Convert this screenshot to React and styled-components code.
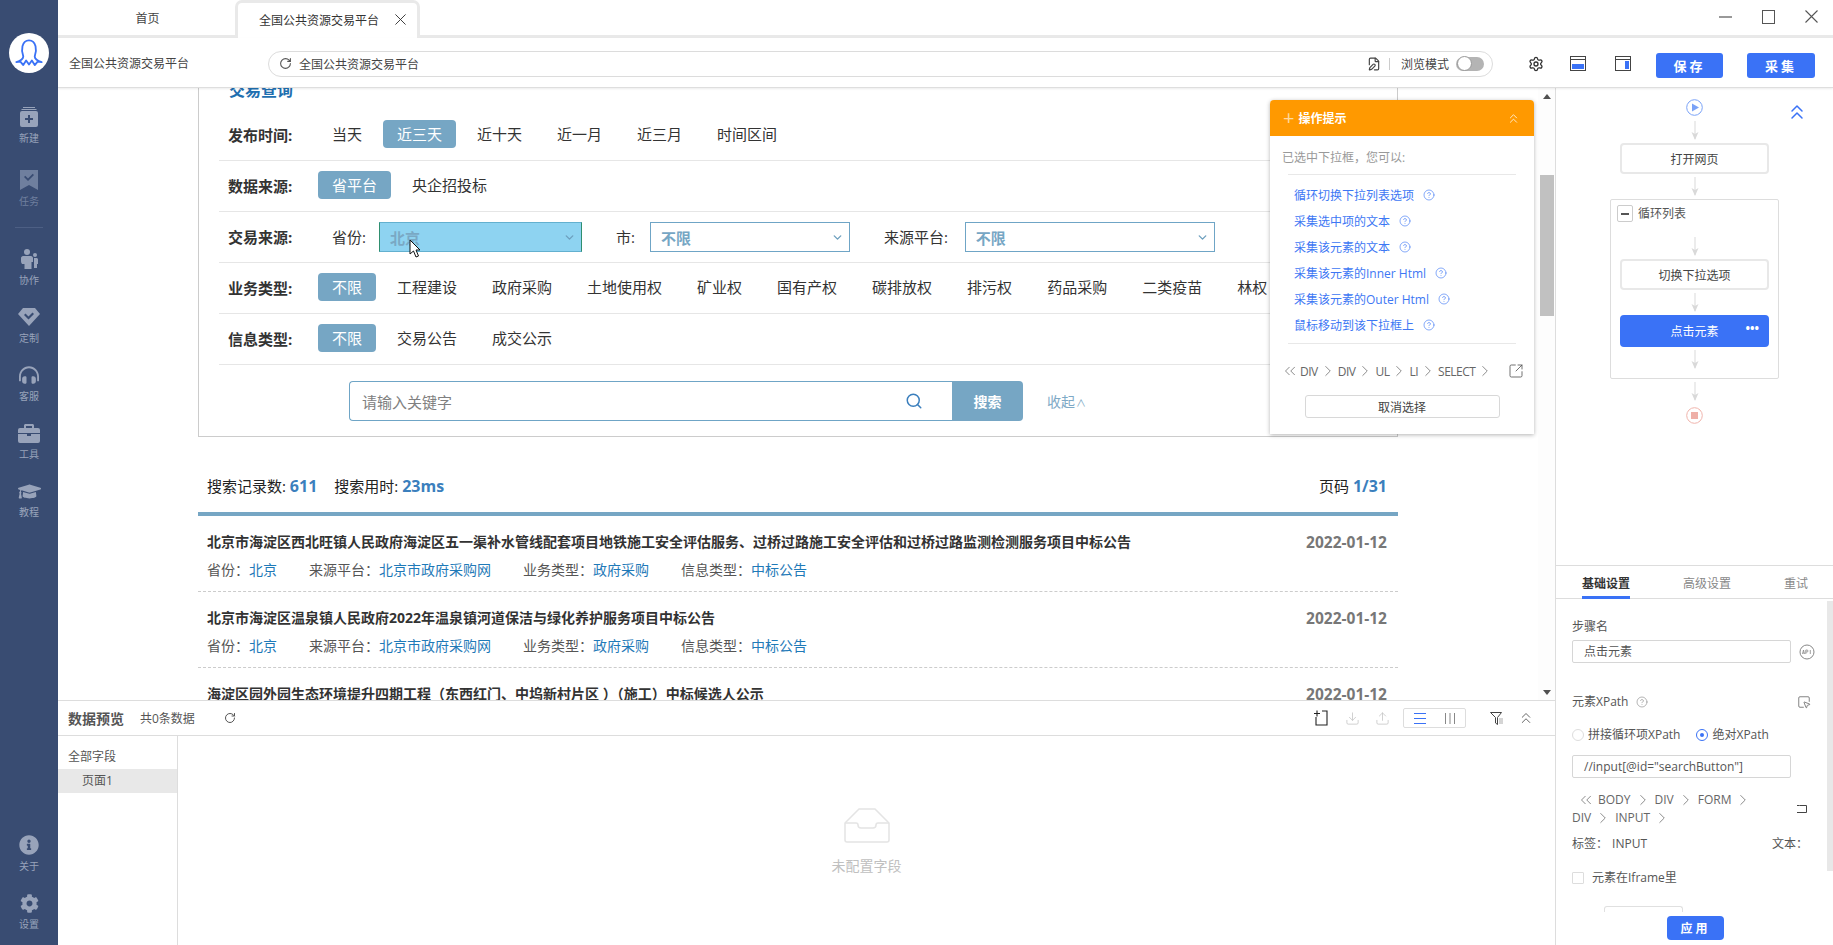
import React from "react";
import styled, { createGlobalStyle } from "styled-components";
import {
  ChevronDown,
  ChevronRight,
  ChevronsLeft,
  ChevronsUp,
  CircleHelp,
  Download,
  FilePen,
  RotateCw,
  Search,
  Settings,
  SquareArrowOutUpRight,
  SquareMousePointer,
  Upload,
} from "lucide-react";
import { FaCog, FaGraduationCap, FaHeadphonesAlt, FaInfoCircle } from "react-icons/fa";

const GlobalStyle = createGlobalStyle`
  html, body { margin: 0; padding: 0; height: 100%; background: #fff; overflow: hidden; }
  body { font-family: "Open Sans", "Noto Sans CJK SC", sans-serif; font-size: 12px; color: #333; }
  * { box-sizing: border-box; }
`;

// full-width punctuation, kept as escapes so that it cannot get normalized away
const COLON = "\uFF1A";
const COMMA = "\uFF0C";
const LP = "\uFF08";
const RP = "\uFF09";

// --- shell ---

const Shell = styled.div`
  display: flex;
  width: 1833px;
  height: 945px;
  overflow: hidden;
`;

const Sidebar = styled.aside`
  width: 58px;
  flex: none;
  background: #394c72;
  display: flex;
  flex-direction: column;
  align-items: center;
  padding: 33px 0 14px;
`;

const Logo = styled.div`
  width: 40px;
  height: 40px;
  border-radius: 50%;
  background: #fff;
  margin-bottom: 34px;
  display: flex;
`;

const NavGroup = styled.div`
  display: flex;
  flex-direction: column;
  align-items: center;
  gap: ${(p) => p.$gap}px;
  margin-top: ${(p) => (p.$bottom ? "auto" : "0")};
`;

const NavItem = styled.div`
  display: flex;
  flex-direction: column;
  align-items: center;
  color: ${(p) => (p.$dim ? "#6f7f9e" : "#98a3ba")};
`;

const NavIcon = styled.div`
  height: 20px;
  display: flex;
  align-items: center;
  justify-content: center;
`;

const NavLabel = styled.div`
  font-size: 10px;
  line-height: 14px;
  margin-top: 4px;
`;

const NavDivider = styled.div`
  width: 28px;
  height: 1px;
  background: #4d5f84;
  margin: 19px 0 21px;
`;

const Workspace = styled.div`
  flex: 1;
  min-width: 0;
  display: flex;
  flex-direction: column;
`;

// --- tabs ---

const TabBar = styled.div`
  height: 38px;
  flex: none;
  display: flex;
  align-items: stretch;
  border-bottom: 3px solid #e9e9e9;
`;

const HomeTab = styled.div`
  width: 177px;
  display: flex;
  align-items: center;
  justify-content: center;
  padding-left: 2px;
  color: #444;
`;

const ActiveTab = styled.div`
  width: 185px;
  margin: 0 0 -3px 0;
  border: 3px solid #e9e9e9;
  border-bottom: none;
  border-radius: 7px 7px 0 0;
  background: #fff;
  display: flex;
  align-items: center;
  padding: 0 0 2px 21px;
  gap: 16px;
  color: #333;
  position: relative;
`;

const WindowControls = styled.div`
  margin-left: auto;
  display: flex;
  align-items: center;
  gap: 30px;
  padding: 0 15px 2px 0;
  color: #555;
`;

// --- toolbar ---

const Toolbar = styled.div`
  height: 50px;
  flex: none;
  display: flex;
  align-items: center;
  padding: 2px 16px 0 11px;
  background: #fff;
  border-bottom: 1px solid #dedede;
  box-shadow: 0 1px 2px rgba(0, 0, 0, 0.08);
  position: relative;
  z-index: 3;
`;

const PageTitle = styled.div`
  width: 199px;
  flex: none;
  color: #444;
  margin-top: -2px;
`;

const AddressBar = styled.div`
  width: 1225px;
  height: 26px;
  flex: none;
  border: 1px solid #dcdcdc;
  border-radius: 13px;
  display: flex;
  align-items: center;
  padding: 0 8px 0 10px;
  color: #444;
`;

const AddressText = styled.span`
  margin-left: 7px;
  flex: 1;
`;

const AddressSep = styled.span`
  width: 1px;
  height: 12px;
  background: #ccc;
  margin: 0 11px 0 8px;
`;

const Toggle = styled.span`
  width: 28px;
  height: 14px;
  border-radius: 7px;
  background: #b4b4b4;
  margin-left: 7px;
  display: flex;
  align-items: center;
  padding-left: 1px;

  &::before {
    content: "";
    width: 13px;
    height: 13px;
    border-radius: 50%;
    background: #fff;
    border: 1px solid #999;
  }
`;

const ToolIcons = styled.div`
  display: flex;
  align-items: center;
  margin-left: 35px;
  color: #333;
`;

const ToolIcon = styled.span`
  display: flex;
  margin-left: ${(p) => p.$ml || 0}px;
`;

const PrimaryButton = styled.button`
  height: 25px;
  width: ${(p) => p.$width || 67}px;
  margin-left: ${(p) => p.$ml || 25}px;
  margin-top: 3px;
  border: none;
  border-radius: 3px;
  background: #3a72f6;
  color: #fff;
  font: bold 13px "Open Sans", "Noto Sans CJK SC", sans-serif;
  letter-spacing: 3px;
`;

// --- body ---

const Body = styled.div`
  flex: 1;
  min-height: 0;
  display: flex;
`;

const Center = styled.div`
  flex: 1;
  min-width: 0;
  display: flex;
  flex-direction: column;
`;

const Browser = styled.div`
  height: 612px;
  flex: none;
  display: flex;
  position: relative;
  overflow: hidden;
`;

const PageScroll = styled.div`
  flex: 1;
  min-width: 0;
  overflow: hidden;
  padding-left: 140px;
`;

const PageInner = styled.div`
  width: 1200px;
  margin-top: -14px;
`;

const Scrollbar = styled.div`
  width: 17px;
  flex: none;
  display: flex;
  flex-direction: column;
  align-items: center;
  padding: 6px 0 5px;
  background: #fdfdfd;
`;

const ScrollArrow = styled.span`
  width: 0;
  height: 0;
  border-left: 4px solid transparent;
  border-right: 4px solid transparent;
  ${(p) => (p.$down ? "border-top: 5px solid #505050;" : "border-bottom: 5px solid #505050;")}
  ${(p) => (p.$down ? "margin-top: auto;" : "")}
`;

const ScrollThumb = styled.div`
  width: 14px;
  height: 141px;
  background: #c1c1c1;
  margin-top: 76px;
`;

const Card = styled.section`
  border: 1px solid #ccc;
  border-top: none;
  height: 363px;
`;

const CardTitle = styled.h2`
  margin: 0 0 0 30px;
  height: 36px;
  font-size: 16px;
  line-height: 32px;
  font-weight: bold;
  color: #1f6fb0;
`;

const FilterRow = styled.div`
  height: 51px;
  margin-left: 20px;
  padding: 10px 0 0 9px;
  border-bottom: 1px solid #e6e6e6;
  display: flex;
  align-items: flex-start;
  font-size: 15px;
  color: #333;
`;

const FilterLabel = styled.div`
  width: 90px;
  flex: none;
  font-weight: bold;
  line-height: 30px;
`;

const OptionList = styled.div`
  display: flex;
  gap: 7px;
  white-space: nowrap;
`;

const Option = styled.div`
  height: 28px;
  line-height: 28px;
  padding: 0 14px;
  border-radius: 4px;
  ${(p) => (p.$active ? "background: #76a6c4; color: #fff;" : "")}
`;

const SelectLabel = styled.div`
  line-height: 31px;
  margin-left: ${(p) => p.$ml}px;
  margin-right: ${(p) => p.$mr}px;
`;

const Select = styled.div`
  width: ${(p) => p.$width}px;
  height: 30px;
  border: 1px solid #6fa5c6;
  display: flex;
  align-items: center;
  justify-content: space-between;
  padding: 0 5px 0 10px;
  font-weight: bold;
  color: #76a6c4;
  position: relative;
  ${(p) =>
    p.$picked
      ? "background: #8ed3f1; border-left-color: #2f8f6f; border-right-color: #2f8f6f; border-top-color: #63b0cf; border-bottom-color: #63b0cf; color: #7aa8c4;"
      : ""}
`;

const Cursor = styled.svg`
  position: absolute;
  left: 29px;
  top: 16px;
`;

const SearchRow = styled.div`
  display: flex;
  align-items: center;
  margin: 16px 0 0 150px;
`;

const SearchBox = styled.div`
  width: 603px;
  height: 40px;
  border: 1px solid #6fa5c6;
  border-right: none;
  border-radius: 4px 0 0 4px;
  display: flex;
  align-items: center;
  justify-content: space-between;
  padding: 0 29px 0 12px;
  font-size: 15px;
  color: #808080;
`;

const SearchButton = styled.button`
  width: 71px;
  height: 40px;
  border: none;
  border-radius: 0 4px 4px 0;
  background: #76a6c4;
  color: #fff;
  font: bold 14px "Open Sans", "Noto Sans CJK SC", sans-serif;
`;

const Collapse = styled.div`
  margin-left: 24px;
  font-size: 14px;
  color: #7ea9c6;
`;

const CollapseCaret = styled.span`
  font-size: 10px;
  margin-left: 1px;
`;

const Stats = styled.div`
  height: 75px;
  padding: 39px 11px 0 9px;
  display: flex;
  font-size: 15px;
  line-height: 20px;
  color: #222;
  justify-content: space-between;
`;

const StatGroup = styled.div`
  display: flex;
  gap: ${(p) => p.$gap || 0}px;
`;

const Stat = styled.span`
  white-space: pre;
`;

const StatValue = styled.b`
  font-size: 16px;
  color: #3b7fbd;
`;

const ResultList = styled.div`
  border-top: 4px solid #76a6c4;
`;

const ResultItem = styled.article`
  height: 76px;
  padding: 14px 11px 0 9px;
  border-bottom: 1px dashed #ccc;
`;

const ResultHead = styled.div`
  display: flex;
  justify-content: space-between;
  line-height: 24px;
`;

const ResultTitle = styled.div`
  font-size: 14px;
  font-weight: bold;
  color: #333;
`;

const ResultDate = styled.div`
  font-size: 15.500px;
  font-weight: bold;
  color: #777;
`;

const MetaRow = styled.div`
  margin-top: 6px;
  line-height: 20px;
  display: flex;
  font-size: 14px;
  color: #555;
`;

const MetaField = styled.div`
  width: ${(p) => p.$width}px;
  flex: none;
`;

const MetaValue = styled.span`
  color: #1f7ab8;
`;

// --- tip popup ---

const TipBox = styled.div`
  position: absolute;
  left: 1212px;
  top: 12px;
  width: 264px;
  height: 334px;
  background: #fff;
  border-radius: 4px 4px 0 0;
  box-shadow: 0 1px 4px rgba(0, 0, 0, 0.3);
  z-index: 2;
`;

const TipHeader = styled.div`
  height: 36px;
  background: #ff9900;
  border-radius: 4px 4px 0 0;
  color: #fff;
  display: flex;
  align-items: center;
  padding: 0 13px;
  font-weight: bold;
`;

const TipPlus = styled.span`
  font-size: 20px;
  font-weight: normal;
  color: #ffd9a0;
  margin-right: 4px;
  line-height: 1;
`;

const TipHint = styled.div`
  padding: 14px 12px 0;
  line-height: 16px;
  color: #999;
  height: 38px;
`;

const TipRule = styled.div`
  height: 1px;
  margin: 0 18px;
  background: #e8e8e8;
`;

const TipLinks = styled.div`
  display: flex;
  flex-direction: column;
  padding: 7px 0 5px 24px;
`;

const TipLink = styled.div`
  height: 26px;
  display: flex;
  align-items: center;
  gap: 9px;
  color: #3d77f4;
`;

const Crumbs = styled.div`
  display: flex;
  align-items: center;
  gap: ${(p) => p.$gap || 0}px;
  color: #666;
  white-space: nowrap;
  height: ${(p) => p.$height || 18}px;
  margin-left: ${(p) => p.$ml || 0}px;
  letter-spacing: ${(p) => p.$tight ? "-0.5px" : "0"};
`;

const TipCrumbRow = styled.div`
  display: flex;
  align-items: center;
  justify-content: space-between;
  margin-top: 18px;
  padding: 0 10px 0 11px;
  color: #555;
`;

const CancelButton = styled.div`
  width: 195px;
  height: 23px;
  margin: 15px auto 0;
  border: 1px solid #d8d8d8;
  border-radius: 3px;
  display: flex;
  align-items: center;
  justify-content: center;
  color: #444;
`;

// --- data preview ---

const Preview = styled.div`
  flex: 1;
  min-height: 0;
  border-top: 1px solid #ddd;
  display: flex;
  flex-direction: column;
  background: #fff;
`;

const PreviewBar = styled.div`
  height: 35px;
  flex: none;
  border-bottom: 1px solid #ddd;
  display: flex;
  align-items: center;
  padding: 0 0 0 10px;
`;

const PreviewTitle = styled.b`
  font-size: 14px;
  font-weight: bold;
  color: #555;
  margin-right: 16px;
`;

const PreviewCount = styled.span`
  color: #555;
  margin-right: 29px;
`;

const PreviewActions = styled.div`
  margin-left: auto;
  padding-right: 20px;
  display: flex;
  align-items: center;
  color: #333;
`;

const ActionIcon = styled.span`
  width: 18px;
  display: flex;
  justify-content: center;
  margin-left: ${(p) => p.$ml}px;
  color: ${(p) => p.$color || "#333"};
`;

const ViewSwitch = styled.div`
  width: 63px;
  height: 20px;
  margin-left: 12px;
  border: 1px solid #ddd;
  border-radius: 2px;
  display: flex;
  align-items: center;
  justify-content: space-around;
`;

const PreviewBody = styled.div`
  flex: 1;
  min-height: 0;
  display: flex;
`;

const FieldTree = styled.div`
  width: 120px;
  flex: none;
  border-right: 1px solid #ddd;
  padding-top: 10px;
`;

const FieldRoot = styled.div`
  height: 23px;
  line-height: 22px;
  padding-left: 10px;
  color: #555;
`;

const FieldChild = styled.div`
  height: 24px;
  line-height: 24px;
  padding-left: 24px;
  background: #e8e8e8;
  color: #555;
`;

const EmptyState = styled.div`
  flex: 1;
  display: flex;
  flex-direction: column;
  align-items: center;
  padding-top: 72px;
  font-size: 14px;
  color: #c0c0c0;
`;

const EmptyText = styled.div`
  margin-top: 13px;
  line-height: 20px;
`;

// --- right panel ---

const RightPanel = styled.div`
  width: 278px;
  flex: none;
  border-left: 1px solid #ddd;
  display: flex;
  flex-direction: column;
`;

const FlowArea = styled.div`
  height: 477px;
  flex: none;
  padding-top: 11px;
  display: flex;
  flex-direction: column;
  align-items: center;
  position: relative;
`;

const FlowCollapse = styled.span`
  position: absolute;
  left: 229px;
  top: 12px;
  display: flex;
  color: #3a72f6;
`;

const FlowEnd = styled.span`
  display: flex;
  margin: ${(p) => p.$margin};
`;

const FlowArrow = styled.svg`
  display: block;
  margin: 3px 0;
  flex: none;
`;

const FlowNode = styled.div`
  width: 149px;
  height: ${(p) => p.$height || 31}px;
  flex: none;
  border-radius: 4px;
  border: 2px solid ${(p) => (p.$active ? "#3a72f6" : "#e8e8e8")};
  background: ${(p) => (p.$active ? "#3a72f6" : "#fff")};
  color: ${(p) => (p.$active ? "#fff" : "#444")};
  display: flex;
  align-items: center;
  justify-content: center;
  position: relative;
`;

const NodeDots = styled.span`
  position: absolute;
  right: 8px;
  top: 5px;
  font-size: 12px;
  line-height: 14px;
  font-weight: bold;
  letter-spacing: 0;
`;

const LoopBox = styled.div`
  width: 169px;
  height: 180px;
  flex: none;
  border: 1px solid #ddd;
  border-radius: 2px;
  display: flex;
  flex-direction: column;
  align-items: center;
  position: relative;
`;

const LoopHead = styled.div`
  width: 100%;
  height: 34px;
  padding: 5px 0 0 6px;
  display: flex;
  align-items: flex-start;
  gap: 5px;
  color: #555;
  line-height: 17px;
`;

const LoopToggle = styled.span`
  width: 16px;
  height: 17px;
  border: 1px solid #ccc;
  border-radius: 2px;
  display: flex;
  align-items: center;
  justify-content: center;

  &::before {
    content: "";
    width: 8px;
    height: 2px;
    background: #555;
  }
`;

// --- settings ---

const SettingsTabs = styled.div`
  height: 34px;
  flex: none;
  border-top: 1px solid #ddd;
  border-bottom: 1px solid #ddd;
  display: flex;
  padding-left: 26px;
`;

const SettingsTab = styled.div`
  margin-right: ${(p) => p.$mr}px;
  height: 33px;
  line-height: 35px;
  color: ${(p) => (p.$active ? "#333" : "#888")};
  font-weight: ${(p) => (p.$active ? "bold" : "normal")};
  ${(p) => (p.$active ? "border-bottom: 3px solid #3a72f6;" : "")}
`;

const SettingsBody = styled.div`
  flex: 1;
  min-height: 0;
  display: flex;
`;

const SettingsForm = styled.div`
  flex: 1;
  min-width: 0;
  padding: 20px 0 0 16px;
  line-height: 16px;
  color: #555;
`;

const SettingsTrack = styled.div`
  width: 6px;
  height: 270px;
  margin-top: 2px;
  flex: none;
  background: #e8e8e8;
`;

const FieldLine = styled.div`
  display: flex;
  align-items: center;
  margin-top: ${(p) => p.$mt || 0}px;
  justify-content: ${(p) => (p.$between ? "space-between" : "flex-start")};
  padding-right: ${(p) => p.$pr || 0}px;
`;

const LabelGroup = styled.span`
  display: flex;
  align-items: center;
  gap: 8px;
`;

const TextInput = styled.div`
  width: 219px;
  height: 23px;
  line-height: 21px;
  border: 1px solid #d6d6d6;
  border-radius: 2px;
  padding-left: 11px;
  color: #555;
  flex: none;
  margin-top: ${(p) => p.$mt || 0}px;
`;

const RoundMark = styled.span`
  width: 12px;
  height: 12px;
  border-radius: 50%;
  border: 1px solid ${(p) => (p.$on ? "#3a72f6" : "#ddd")};
  display: flex;
  align-items: center;
  justify-content: center;
  margin-right: 4px;
  margin-left: ${(p) => p.$ml || 0}px;

  &::before {
    content: "";
    width: 4px;
    height: 4px;
    border-radius: 50%;
    background: ${(p) => (p.$on ? "#3a72f6" : "transparent")};
  }
`;

const CheckMark = styled.span`
  width: 12px;
  height: 12px;
  border: 1px solid #ddd;
  border-radius: 1px;
  margin-right: 8px;
`;

const CrumbBlock = styled.div`
  margin-top: 13px;
  display: flex;
  justify-content: space-between;
  align-items: center;
  padding-right: 20px;
`;

const TagText = styled.span`
  margin-left: ${(p) => p.$ml}px;
`;

const HiddenField = styled.div`
  width: 79px;
  height: 6px;
  margin: 20px 0 0 32px;
  border: 1px solid #e0e0e0;
  border-bottom: none;
  border-radius: 3px 3px 0 0;
`;

const ApplyRow = styled.div`
  display: flex;
  padding-left: 95px;
  margin-top: 4px;
`;

const ApplyButton = styled.button`
  width: 57px;
  height: 24px;
  border: none;
  border-radius: 4px;
  background: #3a72f6;
  color: #fff;
  font: bold 12px "Open Sans", "Noto Sans CJK SC", sans-serif;
  letter-spacing: 3px;
`;

// --- small drawings ---

const OctopusLogo = () => (
  <svg width="40" height="40" viewBox="2.600 2.600 34.800 34.800" fill="none" stroke="#3a72f6" strokeWidth="1.600" strokeLinejoin="round">
    <path d="M15 23C13 18 13.5 9 20 9s7 9 5 14c0 2 3 4 6 5l-3.500-.5-2.500 3-2.500-4L20 30l-2.500-3.500-2.500 4-2.500-3L9 28c3-1 6-3 6-5z" />
  </svg>
);

const NewIcon = () => (
  <svg width="20" height="20" viewBox="0 0 20 20" fill="currentColor">
    <path d="M4 0h12v1H4zM2.500 2h15v1h-15z" />
    <path fillRule="evenodd" d="M3 4h14a2 2 0 0 1 2 2v12a2 2 0 0 1-2 2H3a2 2 0 0 1-2-2V6a2 2 0 0 1 2-2zm6 4v3H6v2h3v3h2v-3h3v-2h-3V8z" />
  </svg>
);

const TaskIcon = () => (
  <svg width="18" height="20" viewBox="0 0 18 20" fill="currentColor">
    <path fillRule="evenodd" d="M0 0h18v20l-9-5-9 5zm4 7l4 4 6-6-1.300-1.300L8 8.400 5.300 5.700z" />
  </svg>
);

const TeamIcon = () => (
  <svg width="17" height="20" viewBox="0 0 17 20" fill="currentColor">
    <circle cx="6" cy="3" r="3" />
    <path d="M2 7h8c1 0 2 1 2 2v4h-1.500v7h-7v-5H1c-.8-1-1-2-1-3V9c0-1 1-2 2-2z" />
    <circle cx="14" cy="6" r="2" />
    <path d="M13 9h2.500c.8 0 1.500.7 1.500 1.500V15h-1v4h-3z" />
  </svg>
);

const CustomIcon = () => (
  <svg width="22" height="18" viewBox="0 0 22 18" fill="currentColor">
    <path fillRule="evenodd" d="M5 0h12l5 6-11 12L0 6zm1 7l4.500 4.500L16 6l-1.500-1.500-4 4-3-3z" />
  </svg>
);

const ToolboxIcon = () => (
  <svg width="22" height="19" viewBox="0 0 22 19" fill="currentColor">
    <path fillRule="evenodd" d="M6 4V1.500C6 .7 6.700 0 7.500 0h7C15.300 0 16 .7 16 1.500V4h4a2 2 0 0 1 2 2v3H0V6a2 2 0 0 1 2-2zm2 0h6V2H8z" />
    <path d="M0 10h9v2h4v-2h9v7a2 2 0 0 1-2 2H2a2 2 0 0 1-2-2z" />
  </svg>
);

const ColumnsLayoutIcon = ({ bottom }) => (
  <svg width="16" height="15" viewBox="0 0 16 15" fill="none" stroke="#444">
    <rect x="0.500" y="0.500" width="15" height="14" />
    <path d="M1 3.500h14" />
    {bottom ? (
      <rect x="2" y="8" width="12" height="5" fill="#3a72f6" stroke="none" />
    ) : (
      <rect x="10" y="5" width="4" height="8" fill="#3a72f6" stroke="none" />
    )}
  </svg>
);

const WinMin = () => (
  <svg width="13" height="14" viewBox="0 0 13 14" stroke="#777" strokeWidth="1.500">
    <path d="M0 7h13" />
  </svg>
);

const WinMax = () => (
  <svg width="13" height="14" viewBox="0 0 13 14" fill="none" stroke="#555">
    <rect x="0.500" y="0.500" width="12" height="13" />
  </svg>
);

const WinClose = ({ size = 13, color = "#555" }) => (
  <svg width={size} height={size} viewBox="0 0 13 13" stroke={color} strokeWidth="1.100">
    <path d="M.5.500l12 12M12.500.500l-12 12" />
  </svg>
);

const Arrow = () => (
  <FlowArrow width="10" height="19" viewBox="0 0 10 19">
    <path d="M5 0v18" stroke="#d9d9d9" />
    <path d="M1.500 11L5 19l3.500-8L5 13z" fill="#d9d9d9" />
  </FlowArrow>
);

const StartIcon = () => (
  <svg width="17" height="17" viewBox="0 0 17 17">
    <circle cx="8.500" cy="8.500" r="7.800" fill="#fff" stroke="#7aa2f7" />
    <path d="M6 4.500l7 4-7 4z" fill="#7aa2f7" />
  </svg>
);

const StopIcon = () => (
  <svg width="17" height="17" viewBox="0 0 17 17">
    <circle cx="8.500" cy="8.500" r="7.800" fill="#fff" stroke="#f0b4ac" />
    <rect x="5" y="5" width="7" height="7" fill="#eeb0a8" />
  </svg>
);

const InboxIcon = () => (
  <svg width="46" height="35" viewBox="0 0 46 35" fill="#fff" stroke="#e4e4e4" strokeWidth="1.500">
    <path d="M15 1h16l14 14v17c0 1.500-1 2-2 2H3c-1 0-2-.5-2-2V15z" />
    <path d="M1 15h11c2 0 2 1 2 2 0 2 1 3 3 3h12c2 0 3-1 3-3 0-1 0-2 2-2h11" />
  </svg>
);

const AddFileIcon = () => (
  <svg width="14" height="16" viewBox="0 0 14 16" fill="none" stroke="#222" strokeWidth="1.100">
    <path d="M8 1h5v14H2V7M0 3.500h6M3 .5v6" />
  </svg>
);

const FilterIcon = () => (
  <svg width="13" height="13" viewBox="0 0 13 13" fill="none" stroke="#444">
    <path d="M.5.500h11L7.500 5.500v7l-2-1.500V5.500z" />
    <path d="M9 7h4M9 9h4M9 11h4" stroke="#aaa" />
  </svg>
);

const ListViewIcon = () => (
  <svg width="12" height="11" viewBox="0 0 12 11" stroke="#3a72f6">
    <path d="M0 .5h12M0 5.500h12M0 10.500h12" />
  </svg>
);

const ColumnViewIcon = () => (
  <svg width="10" height="11" viewBox="0 0 10 11" stroke="#888">
    <path d="M.5 0v11M5 0v11M9.500 0v11" />
  </svg>
);

const ApiIcon = () => (
  <svg width="16" height="16" viewBox="0 0 16 16" fill="none">
    <circle cx="8" cy="8" r="7" stroke="#888" />
    <path d="M3.500 10l1-4 1 4M3.900 9h1.200M6.800 10V6h1.200a1 1 0 0 1 0 2H6.800M11.300 6v4" stroke="#888" strokeWidth="0.800" />
  </svg>
);

const BackIcon = () => (
  <svg width="10" height="9" viewBox="0 0 10 9" fill="none" stroke="#444">
    <path d="M2.500.5H9.500v7H0M0 .5l2.500 0" />
  </svg>
);

const CHEVRON = { size: 18, strokeWidth: 1 };

const RowOptions = ({ items, active }) => (
  <OptionList>
    {items.map((t) => (
      <Option key={t} $active={t === active}>{t}</Option>
    ))}
  </OptionList>
);

const results = [
  "北京市海淀区西北旺镇人民政府海淀区五一渠补水管线配套项目地铁施工安全评估服务、过桥过路施工安全评估和过桥过路监测检测服务项目中标公告",
  "北京市海淀区温泉镇人民政府2022年温泉镇河道保洁与绿化养护服务项目中标公告",
];

const tipLinks = [
  "循环切换下拉列表选项",
  "采集选中项的文本",
  "采集该元素的文本",
  "采集该元素的Inner Html",
  "采集该元素的Outer Html",
  "鼠标移动到该下拉框上",
];

const App = () => (
  <Shell>
    <GlobalStyle />
    <Sidebar>
      <Logo><OctopusLogo /></Logo>
      <NavGroup $gap={25}>
        <NavItem><NavIcon><NewIcon /></NavIcon><NavLabel>新建</NavLabel></NavItem>
        <NavItem $dim><NavIcon><TaskIcon /></NavIcon><NavLabel>任务</NavLabel></NavItem>
      </NavGroup>
      <NavDivider />
      <NavGroup $gap={20}>
        <NavItem><NavIcon><TeamIcon /></NavIcon><NavLabel>协作</NavLabel></NavItem>
        <NavItem><NavIcon><CustomIcon /></NavIcon><NavLabel>定制</NavLabel></NavItem>
        <NavItem><NavIcon><FaHeadphonesAlt size={20} /></NavIcon><NavLabel>客服</NavLabel></NavItem>
        <NavItem><NavIcon><ToolboxIcon /></NavIcon><NavLabel>工具</NavLabel></NavItem>
        <NavItem><NavIcon><FaGraduationCap size={23} /></NavIcon><NavLabel>教程</NavLabel></NavItem>
      </NavGroup>
      <NavGroup $gap={20} $bottom>
        <NavItem><NavIcon><FaInfoCircle size={20} /></NavIcon><NavLabel>关于</NavLabel></NavItem>
        <NavItem><NavIcon><FaCog size={19} /></NavIcon><NavLabel>设置</NavLabel></NavItem>
      </NavGroup>
    </Sidebar>

    <Workspace>
      <TabBar>
        <HomeTab>首页</HomeTab>
        <ActiveTab>全国公共资源交易平台<WinClose size={11} color="#333" /></ActiveTab>
        <WindowControls><WinMin /><WinMax /><WinClose /></WindowControls>
      </TabBar>

      <Toolbar>
        <PageTitle>全国公共资源交易平台</PageTitle>
        <AddressBar>
          <RotateCw size={13} color="#555" />
          <AddressText>全国公共资源交易平台</AddressText>
          <FilePen size={14} color="#444" />
          <AddressSep />
          浏览模式
          <Toggle />
        </AddressBar>
        <ToolIcons>
          <Settings size={16} />
          <ToolIcon $ml={26}><ColumnsLayoutIcon bottom /></ToolIcon>
          <ToolIcon $ml={29}><ColumnsLayoutIcon /></ToolIcon>
        </ToolIcons>
        <PrimaryButton>保存</PrimaryButton>
        <PrimaryButton $width={68} $ml={24}>采集</PrimaryButton>
      </Toolbar>

      <Body>
        <Center>
          <Browser>
            <PageScroll>
              <PageInner>
                <Card>
                  <CardTitle>交易查询</CardTitle>
                  <FilterRow>
                    <FilterLabel>发布时间:</FilterLabel>
                    <RowOptions active="近三天" items={["当天", "近三天", "近十天", "近一月", "近三月", "时间区间"]} />
                  </FilterRow>
                  <FilterRow>
                    <FilterLabel>数据来源:</FilterLabel>
                    <RowOptions active="省平台" items={["省平台", "央企招投标"]} />
                  </FilterRow>
                  <FilterRow>
                    <FilterLabel>交易来源:</FilterLabel>
                    <SelectLabel $ml={14} $mr={13}>省份:</SelectLabel>
                    <Select $width={203} $picked>
                      北京
                      <ChevronDown size={13} strokeWidth={2.5} color="#6d9fbe" />
                      <Cursor width="12" height="19" viewBox="0 0 12 19">
                        <path d="M1 1v14l3.500-3 2.500 6 2.500-1-2.500-6H11z" fill="#fff" stroke="#111" />
                      </Cursor>
                    </Select>
                    <SelectLabel $ml={34} $mr={15}>市:</SelectLabel>
                    <Select $width={200}>
                      不限
                      <ChevronDown size={13} strokeWidth={2.5} color="#6d9fbe" />
                    </Select>
                    <SelectLabel $ml={34} $mr={17}>来源平台:</SelectLabel>
                    <Select $width={250}>
                      不限
                      <ChevronDown size={13} strokeWidth={2.5} color="#6d9fbe" />
                    </Select>
                  </FilterRow>
                  <FilterRow>
                    <FilterLabel>业务类型:</FilterLabel>
                    <RowOptions
                      active="不限"
                      items={["不限", "工程建设", "政府采购", "土地使用权", "矿业权", "国有产权", "碳排放权", "排污权", "药品采购", "二类疫苗", "林权"]}
                    />
                  </FilterRow>
                  <FilterRow>
                    <FilterLabel>信息类型:</FilterLabel>
                    <RowOptions active="不限" items={["不限", "交易公告", "成交公示"]} />
                  </FilterRow>
                  <SearchRow>
                    <SearchBox>
                      请输入关键字
                      <Search size={18} color="#3b7fbd" />
                    </SearchBox>
                    <SearchButton>搜索</SearchButton>
                    <Collapse>收起<CollapseCaret>∧</CollapseCaret></Collapse>
                  </SearchRow>
                </Card>

                <Stats>
                  <StatGroup $gap={17}>
                    <Stat>搜索记录数: <StatValue>611</StatValue></Stat>
                    <Stat>搜索用时: <StatValue>23ms</StatValue></Stat>
                  </StatGroup>
                  <Stat>页码 <StatValue>1/31</StatValue></Stat>
                </Stats>

                <ResultList>
                  {results.map((title) => (
                    <ResultItem key={title}>
                      <ResultHead>
                        <ResultTitle>{title}</ResultTitle>
                        <ResultDate>2022-01-12</ResultDate>
                      </ResultHead>
                      <MetaRow>
                        <MetaField $width={102}>省份{COLON}<MetaValue>北京</MetaValue></MetaField>
                        <MetaField $width={214}>来源平台{COLON}<MetaValue>北京市政府采购网</MetaValue></MetaField>
                        <MetaField $width={158}>业务类型{COLON}<MetaValue>政府采购</MetaValue></MetaField>
                        <MetaField $width={140}>信息类型{COLON}<MetaValue>中标公告</MetaValue></MetaField>
                      </MetaRow>
                    </ResultItem>
                  ))}
                  <ResultItem>
                    <ResultHead>
                      <ResultTitle>海淀区园外园生态环境提升四期工程{LP}东西红门、中坞新村片区 {RP}{LP}施工{RP}中标候选人公示</ResultTitle>
                      <ResultDate>2022-01-12</ResultDate>
                    </ResultHead>
                  </ResultItem>
                </ResultList>
              </PageInner>
            </PageScroll>
            <Scrollbar>
              <ScrollArrow />
              <ScrollThumb />
              <ScrollArrow $down />
            </Scrollbar>

            <TipBox>
              <TipHeader>
                <TipPlus>+</TipPlus>
                操作提示
                <ChevronsUp size={15} strokeWidth={1.25} style={{ marginLeft: "auto" }} />
              </TipHeader>
              <TipHint>已选中下拉框{COMMA}您可以:</TipHint>
              <TipRule />
              <TipLinks>
                {tipLinks.map((t) => (
                  <TipLink key={t}>{t}<CircleHelp size={12} strokeWidth={1.25} /></TipLink>
                ))}
              </TipLinks>
              <TipRule />
              <TipCrumbRow>
                <Crumbs $gap={1} $tight>
                  <ChevronsLeft {...CHEVRON} />DIV
                  <ChevronRight {...CHEVRON} />DIV
                  <ChevronRight {...CHEVRON} />UL
                  <ChevronRight {...CHEVRON} />LI
                  <ChevronRight {...CHEVRON} />SELECT
                  <ChevronRight {...CHEVRON} />
                </Crumbs>
                <SquareArrowOutUpRight size={16} strokeWidth={1.25} />
              </TipCrumbRow>
              <CancelButton>取消选择</CancelButton>
            </TipBox>
          </Browser>

          <Preview>
            <PreviewBar>
              <PreviewTitle>数据预览</PreviewTitle>
              <PreviewCount>共0条数据</PreviewCount>
              <RotateCw size={12} color="#555" />
              <PreviewActions>
                <ActionIcon $ml={0}><AddFileIcon /></ActionIcon>
                <ActionIcon $ml={13} $color="#c4c4c4"><Download size={15} strokeWidth={1.25} /></ActionIcon>
                <ActionIcon $ml={12} $color="#c4c4c4"><Upload size={15} strokeWidth={1.25} /></ActionIcon>
                <ViewSwitch><ListViewIcon /><ColumnViewIcon /></ViewSwitch>
                <ActionIcon $ml={21}><FilterIcon /></ActionIcon>
                <ActionIcon $ml={12}><ChevronsUp size={18} strokeWidth={1} /></ActionIcon>
              </PreviewActions>
            </PreviewBar>
            <PreviewBody>
              <FieldTree>
                <FieldRoot>全部字段</FieldRoot>
                <FieldChild>页面1</FieldChild>
              </FieldTree>
              <EmptyState>
                <InboxIcon />
                <EmptyText>未配置字段</EmptyText>
              </EmptyState>
            </PreviewBody>
          </Preview>
        </Center>

        <RightPanel>
          <FlowArea>
            <FlowCollapse><ChevronsUp size={24} strokeWidth={1.5} /></FlowCollapse>
            <FlowEnd $margin="0 0 2px"><StartIcon /></FlowEnd>
            <Arrow />
            <FlowNode>打开网页</FlowNode>
            <Arrow />
            <LoopBox>
              <LoopHead><LoopToggle />循环列表</LoopHead>
              <Arrow />
              <FlowNode>切换下拉选项</FlowNode>
              <Arrow />
              <FlowNode $active $height={32}>点击元素<NodeDots>•••</NodeDots></FlowNode>
              <Arrow />
            </LoopBox>
            <Arrow />
            <FlowEnd $margin="3px 0 0"><StopIcon /></FlowEnd>
          </FlowArea>

          <SettingsTabs>
            <SettingsTab $active $mr={53}>基础设置</SettingsTab>
            <SettingsTab $mr={53}>高级设置</SettingsTab>
            <SettingsTab $mr={0}>重试</SettingsTab>
          </SettingsTabs>

          <SettingsBody>
            <SettingsForm>
              <div>步骤名</div>
              <FieldLine $mt={5} $pr={12} $between>
                <TextInput>点击元素</TextInput>
                <ApiIcon />
              </FieldLine>
              <FieldLine $mt={31} $pr={16} $between>
                <LabelGroup>元素XPath<CircleHelp size={12} strokeWidth={1.25} color="#888" /></LabelGroup>
                <SquareMousePointer size={14} strokeWidth={1.25} />
              </FieldLine>
              <FieldLine $mt={17}>
                <RoundMark />拼接循环项XPath
                <RoundMark $on $ml={16} />绝对XPath
              </FieldLine>
              <TextInput $mt={12}>//input[@id="searchButton"]</TextInput>
              <CrumbBlock>
                <div>
                  <Crumbs $gap={3} $ml={5}>
                    <ChevronsLeft {...CHEVRON} />BODY
                    <ChevronRight {...CHEVRON} />DIV
                    <ChevronRight {...CHEVRON} />FORM
                    <ChevronRight {...CHEVRON} />
                  </Crumbs>
                  <Crumbs $gap={3}>
                    DIV
                    <ChevronRight {...CHEVRON} />INPUT
                    <ChevronRight {...CHEVRON} />
                  </Crumbs>
                </div>
                <BackIcon />
              </CrumbBlock>
              <FieldLine $mt={9}>
                标签{COLON}<TagText $ml={4}>INPUT</TagText>
                <TagText $ml={125}>文本{COLON}</TagText>
              </FieldLine>
              <FieldLine $mt={18}>
                <CheckMark />元素在Iframe里
              </FieldLine>
              <HiddenField />
              <ApplyRow><ApplyButton>应用</ApplyButton></ApplyRow>
            </SettingsForm>
            <SettingsTrack />
          </SettingsBody>
        </RightPanel>
      </Body>
    </Workspace>
  </Shell>
);

export default App;
